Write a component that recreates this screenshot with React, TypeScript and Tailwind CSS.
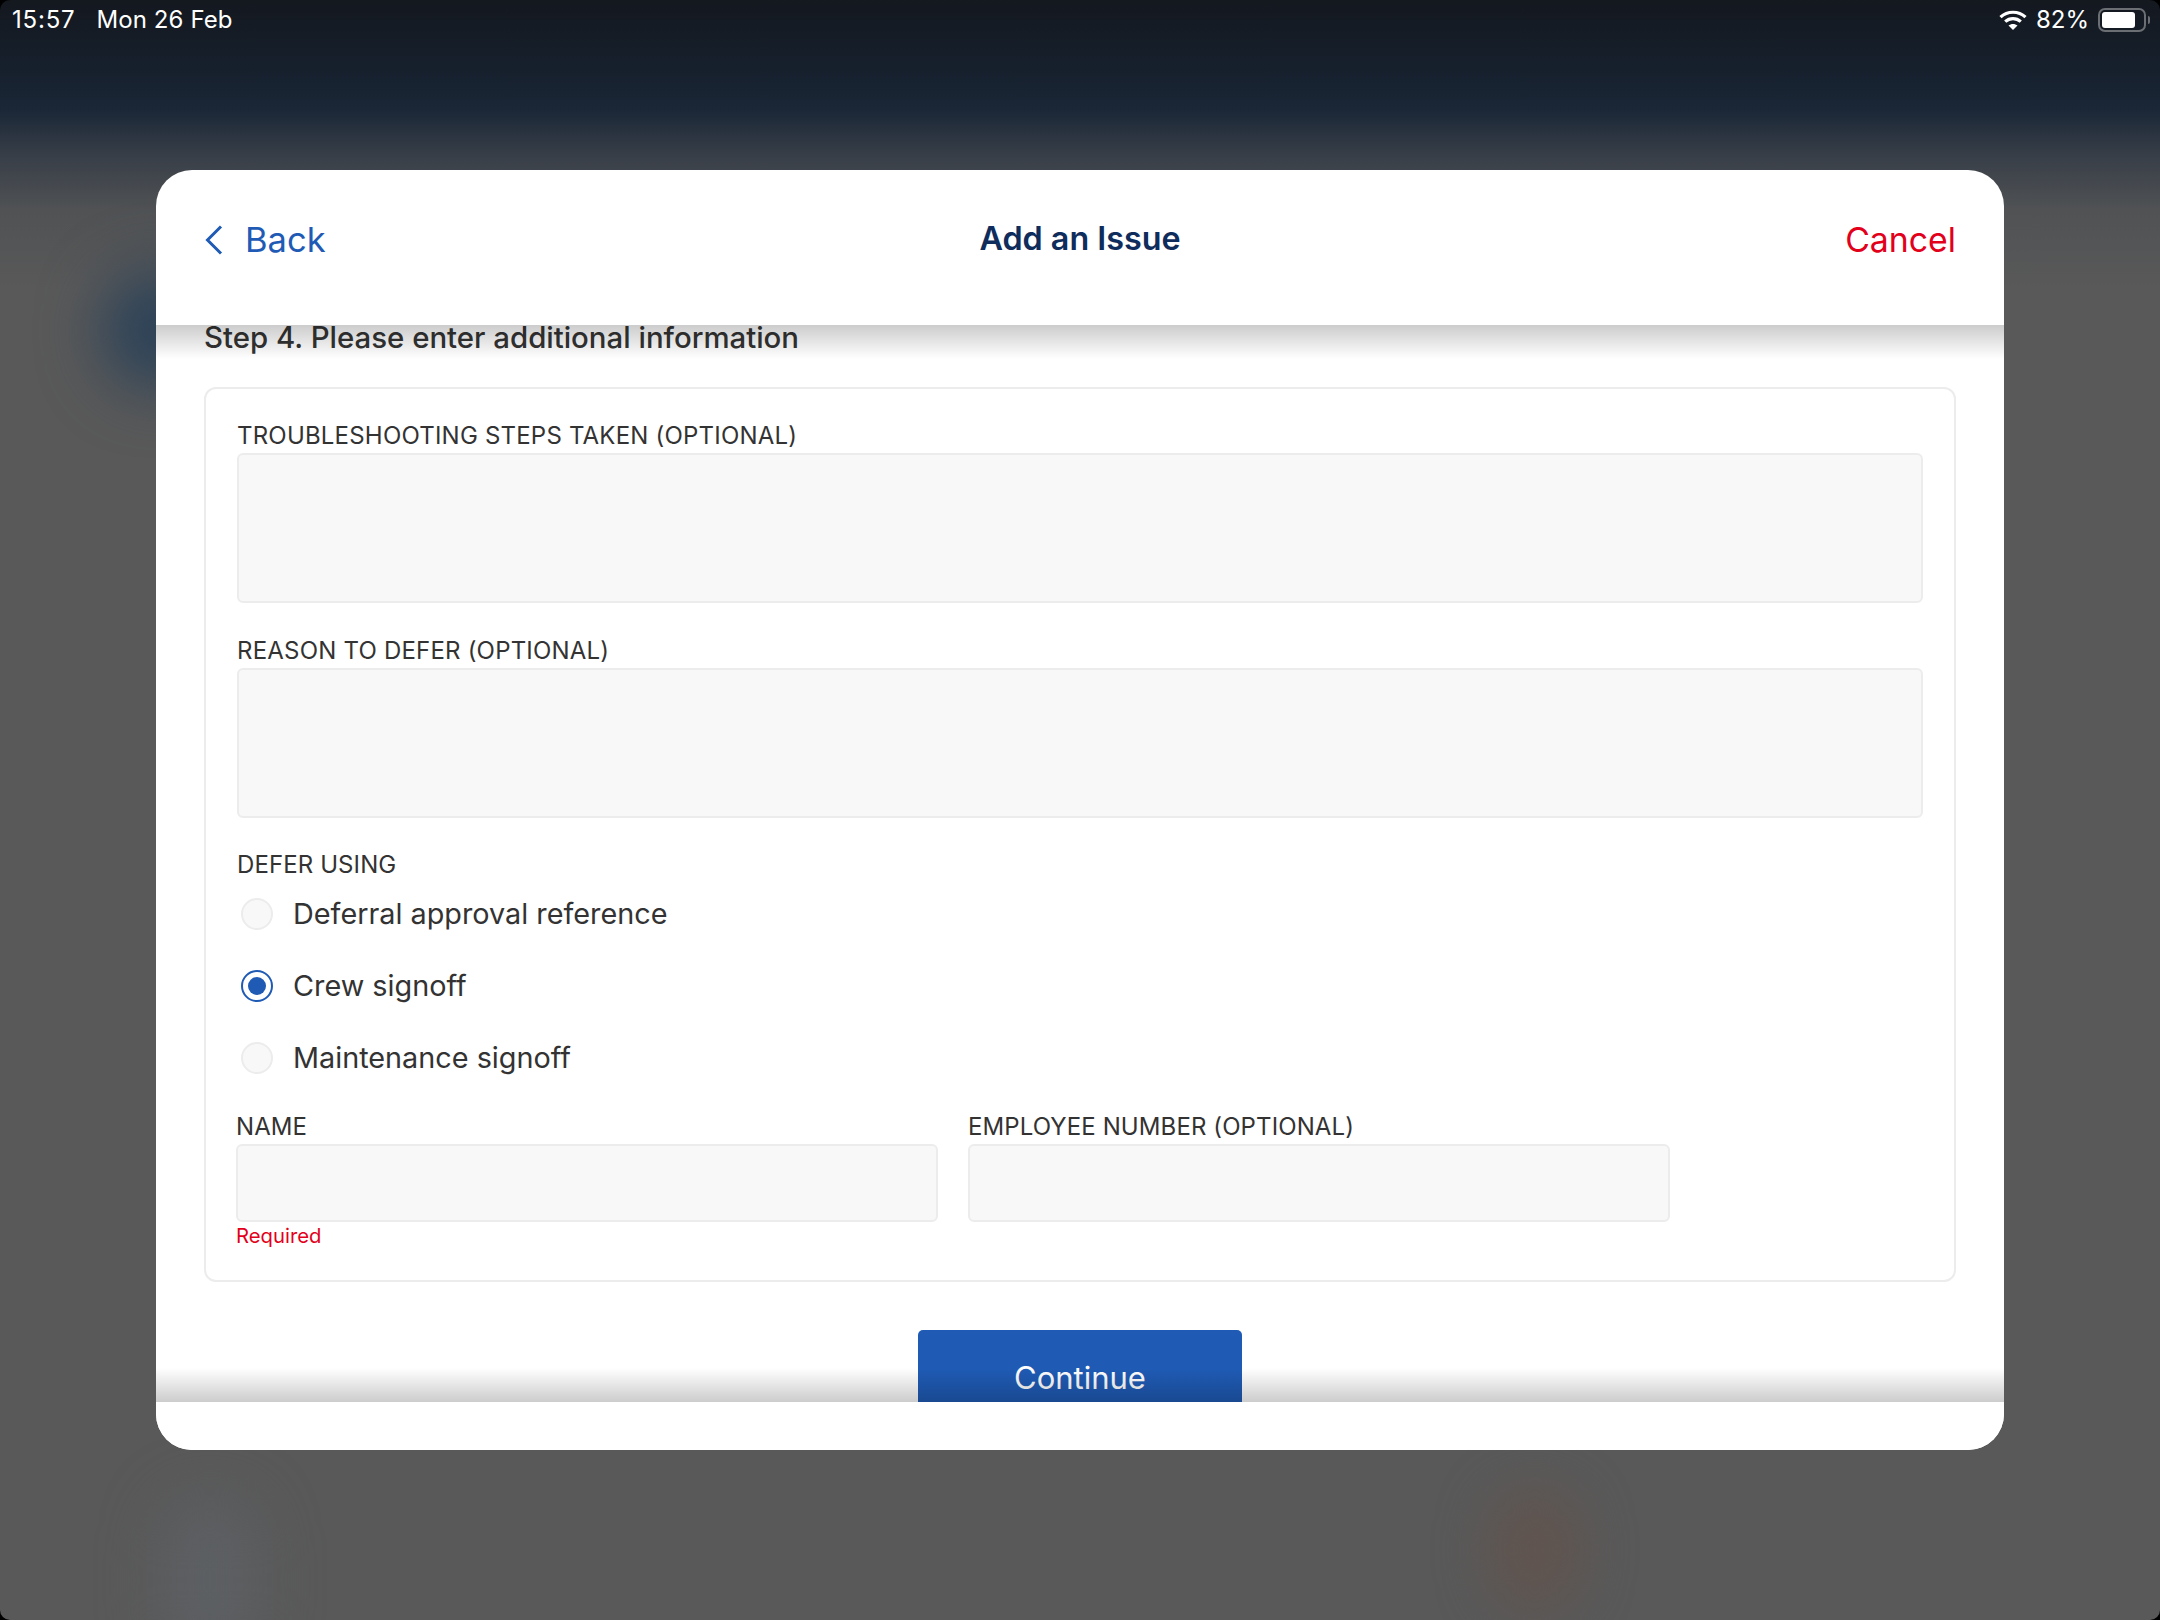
function StatusBar() {
  return (
    <div className="flex h-[40px] items-center justify-between pl-[12px] pr-[10px] text-[24px] text-white">
      <div className="flex gap-[21px]">
        <span className="tracking-[0.8px]">15:57</span>
        <span className="tracking-[0.1px]">Mon 26 Feb</span>
      </div>
      <div className="flex items-center gap-[9px]">
        <svg width="28" height="22" viewBox="0 0 28 22" fill="none">
          <path d="M1.5 8.2C8.5 1.6 19.500 1.600 26.500 8.200" stroke="white" strokeWidth="3.200" />
          <path d="M6.200 12.600C10.700 8.600 17.300 8.600 21.800 12.600" stroke="white" strokeWidth="3.200" />
          <path d="M14 21L9.500 16.500C12 14.400 16 14.400 18.500 16.500Z" fill="white" />
        </svg>
        <span>82%</span>
        <div className="flex items-center gap-[2px]">
          <div className="h-[24px] w-[48px] rounded-[7px] border-2 border-[#6b6e73] p-[2px]">
            <div className="h-full w-[82%] rounded-[3px] bg-white" />
          </div>
          <div className="h-[8px] w-[2px] rounded-r-[2px] bg-[#6b6e73]" />
        </div>
      </div>
    </div>
  );
}

function Area({ label }: { label: string }) {
  return (
    <div className="flex flex-col">
      <label className="h-[34px] pt-[3px] text-[24px] leading-[28px] tracking-[0.2px] text-[#333]">{label}</label>
      <div className="h-[150px] rounded-[6px] border-2 border-[#ececec] bg-[#f8f8f8]" />
    </div>
  );
}

function Radio({ label, checked = false }: { label: string; checked?: boolean }) {
  return (
    <div className="flex h-[72px] items-center gap-[20px] pl-[4px]">
      {checked ? (
        <div className="flex size-[32px] items-center justify-center rounded-full border-2 border-[#1f5bb5] bg-white">
          <div className="size-[18px] rounded-full bg-[#1f5bb5]" />
        </div>
      ) : (
        <div className="size-[32px] rounded-full border-2 border-[#ececec] bg-[#f8f8f8]" />
      )}
      <span className="text-[28.8px] leading-[36px] text-[#333]">{label}</span>
    </div>
  );
}

function Field({ label, error }: { label: string; error?: string }) {
  return (
    <div className="flex w-[702px] flex-col">
      <label className="h-[31px] text-[24px] leading-[28px] tracking-[0.1px] text-[#333]">{label}</label>
      <div className="h-[78px] rounded-[6px] border-2 border-[#ececec] bg-[#f8f8f8]" />
      {error && <p className="mt-[2px] text-[20.300px] leading-[24px] text-[#e2001a]">{error}</p>}
    </div>
  );
}

export default function App() {
  return (
    <div className="relative h-[1620px] w-[2160px] overflow-hidden bg-black font-[Inter,sans-serif]">
      <div className="relative h-full overflow-hidden rounded-[10px] bg-[linear-gradient(180deg,#14181f_0px,#16202d_70px,#1b2737_110px,#3a4049_160px,#505254_210px,#595959_290px)]">
        <div className="absolute left-[100px] top-[270px] h-[120px] w-[120px] rounded-full bg-[#2c4258] blur-[30px]" />
        <div className="absolute left-[165px] top-[1500px] h-[160px] w-[90px] rounded-full bg-[#5d6064] blur-[30px]" />
        <div className="absolute left-[1490px] top-[1490px] h-[120px] w-[90px] rounded-full bg-[#60544f] blur-[25px]" />

        <div className="relative">
          <StatusBar />
        </div>

        <div className="relative mx-auto mt-[130px] flex h-[1280px] w-[1848px] flex-col overflow-hidden rounded-[36px] bg-white">
          <header className="flex h-[155px] shrink-0 items-center justify-between px-[48px] pb-[16px]">
            <div className="flex w-[300px] items-center gap-[22px] pl-[1px] text-[#1f5bb5]">
              <svg width="18" height="30" viewBox="0 0 18 30" fill="none">
                <path d="M16 1.500L2.500 15L16 28.500" stroke="currentColor" strokeWidth="3" />
              </svg>
              <span className="text-[34.500px] leading-[44px]">Back</span>
            </div>
            <h1 className="mb-[2px] text-[32.300px] font-semibold leading-[44px] text-[#0f2d5c]">Add an Issue</h1>
            <div className="w-[300px] text-right text-[33.800px] leading-[44px] text-[#e2001a]">Cancel</div>
          </header>

          <div className="relative flex-1 overflow-hidden">
            <div className="px-[48px]">
              <h2 className="h-[62px] text-[29.400px] font-[450] leading-[26px] text-[#333]">
                Step 4. Please enter additional information
              </h2>
              <section className="h-[895px] rounded-[12px] border-2 border-[#ececec] px-[31px] pt-[30px]">
                <div className="flex flex-col gap-[31px]">
                  <Area label="TROUBLESHOOTING STEPS TAKEN (OPTIONAL)" />
                  <Area label="REASON TO DEFER (OPTIONAL)" />
                </div>
                <p className="mt-[33px] text-[24px] leading-[28px] tracking-[0.1px] text-[#333]">DEFER USING</p>
                <div className="-mt-[1px]">
                  <Radio label="Deferral approval reference" />
                  <Radio label="Crew signoff" checked />
                  <Radio label="Maintenance signoff" />
                </div>
                <div className="-ml-[1px] mt-[19px] flex gap-[30px]">
                  <Field label="NAME" error="Required" />
                  <Field label="EMPLOYEE NUMBER (OPTIONAL)" />
                </div>
              </section>
              <div className="mt-[48px] flex justify-center">
                <button
                  type="button"
                  className="h-[100px] w-[324px] rounded-[5px] bg-[#1f5bb5] pb-[4px] text-[31px] leading-[40px] text-white"
                >
                  Continue
                </button>
              </div>
            </div>
            <div className="pointer-events-none absolute inset-x-0 top-0 h-[34px] bg-gradient-to-b from-black/20 to-transparent" />
            <div className="pointer-events-none absolute inset-x-0 bottom-0 h-[34px] bg-gradient-to-t from-black/20 to-transparent" />
          </div>
          <div className="h-[48px] shrink-0 bg-white" />
        </div>
      </div>
    </div>
  );
}
